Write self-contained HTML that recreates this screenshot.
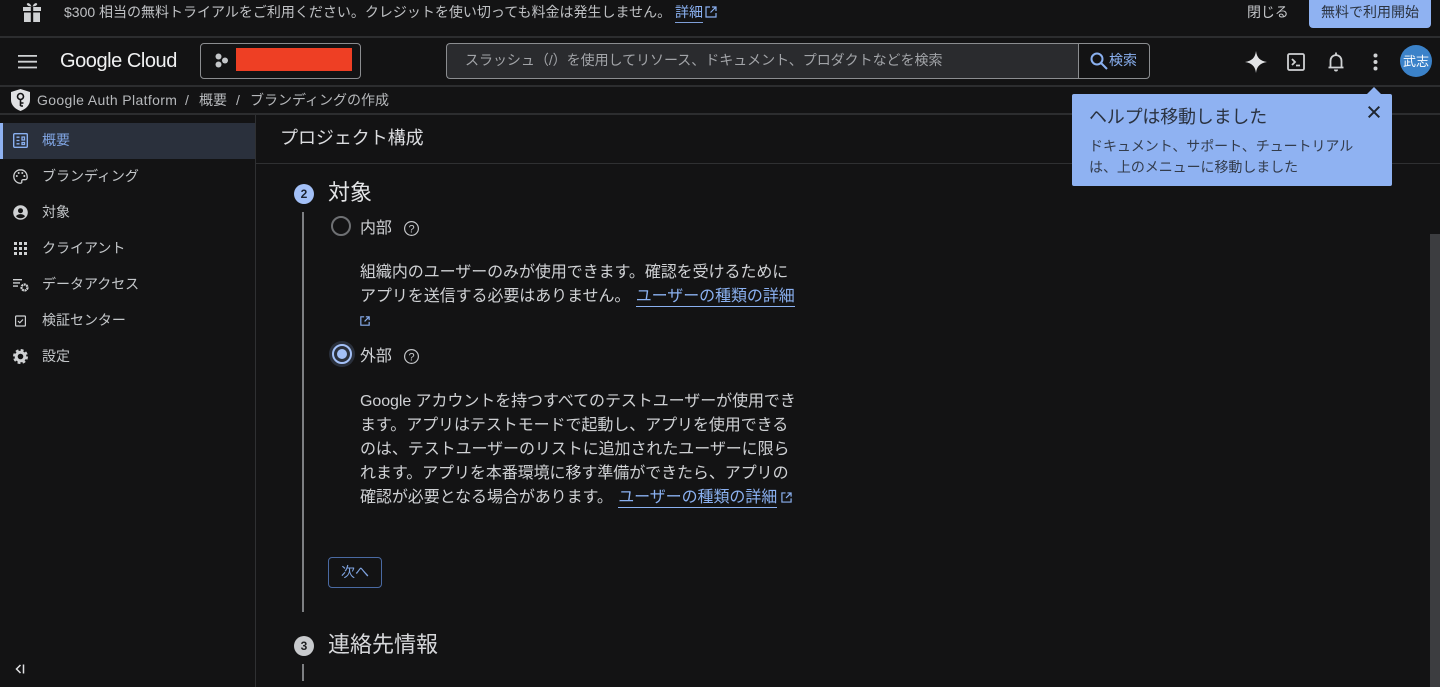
<!DOCTYPE html>
<html lang="ja">
<head>
<meta charset="utf-8">
<title>Google Auth Platform</title>
<style>
html,body{margin:0;padding:0;width:1440px;height:687px;overflow:hidden;background:#131314;}
body{position:relative;font-family:"Liberation Sans","Noto Sans CJK JP",sans-serif;color:#c8cacd;font-size:14px;}
.a{position:absolute;white-space:nowrap;}
.l{position:absolute;background:#2c2d2f;}
svg{position:absolute;display:block;overflow:visible;}
.nav{position:absolute;left:42px;font-size:14px;line-height:20px;color:#c4c7ca;white-space:nowrap;letter-spacing:-.02px;}
.p{position:absolute;left:360px;font-size:16px;line-height:24px;color:#cfd1d4;white-space:nowrap;letter-spacing:-.07px;}
.link{color:#8ab0f0;border-bottom:1px solid #8ab0f0;padding-bottom:1px;}
</style>
</head>
<body>
<!-- top banner -->
<svg style="left:22px;top:2px" width="20" height="20" viewBox="0 0 20 20" fill="#d0d2d4"><path d="M1 5h7.800v4H1zM11.200 5H19v4h-7.800zM2 10.500h6.800V20H2zM11.200 10.500H18V20h-6.800zM5 1.500C6.500.5 8.500 2 9.500 4.500 7 4.500 4 3 5 1.500zM15 1.500C13.500.5 11.500 2 10.500 4.500 13 4.500 16 3 15 1.500z"/></svg>
<div class="a" style="left:64px;top:2px;line-height:20px;font-size:14px;color:#bfc1c4">$300 相当の無料トライアルをご利用ください。クレジットを使い切っても料金は発生しません。</div>
<div class="a" style="left:675px;top:2px;line-height:20px;font-size:14px;color:#8ab0f0;border-bottom:1px solid #7f9fd8">詳細</div>
<svg style="left:705px;top:6px" width="12" height="12" viewBox="0 0 12 12" fill="none" stroke="#8ab0f0" stroke-width="1.200"><path d="M5 1H1v10h10V7M7 1h4v4M11 1L5.500 6.500"/></svg>
<div class="a" style="left:1247px;top:2px;line-height:20px;color:#c4c6c9;letter-spacing:-.1px">閉じる</div>
<div class="a" style="left:1309px;top:-6px;width:122px;height:34px;background:#8fb2f2;border-radius:0 0 4px 4px;color:#2b3340;text-align:center;line-height:36px;font-size:14px">無料で利用開始</div>
<div class="l" style="left:0;top:36px;width:1440px;height:2px"></div>

<!-- header -->
<svg style="left:18px;top:55px" width="19" height="14" viewBox="0 0 19 14" fill="#d0d2d4"><path d="M0 0h19v1.800H0zM0 5.800h19v1.800H0zM0 11.600h19v1.800H0z"/></svg>
<div class="a" style="left:60px;top:47px;font-size:20px;line-height:28px;color:#f0f1f2;letter-spacing:-.45px">Google Cloud</div>
<div class="a" style="left:200px;top:43px;width:159px;height:34px;border:1px solid #8b8d90;border-radius:4px"></div>
<svg style="left:214px;top:53px" width="16" height="16" viewBox="0 0 16 16" fill="#c4c6c9"><circle cx="4.500" cy="3.500" r="3"/><circle cx="4.500" cy="11.500" r="3"/><circle cx="11" cy="7.500" r="3"/></svg>
<div class="a" style="left:236px;top:48px;width:116px;height:23px;background:#ee3f24"></div>

<div class="a" style="left:446px;top:43px;width:632px;height:34px;background:#2a2b2e;border:1px solid #8b8d90;border-right:0;border-radius:4px 0 0 4px"></div>
<div class="a" style="left:465px;top:50px;line-height:20px;font-size:14px;color:#a2a4a8;letter-spacing:-.03px">スラッシュ（/）を使用してリソース、ドキュメント、プロダクトなどを検索</div>
<div class="a" style="left:1078px;top:43px;width:70px;height:34px;border:1px solid #8b8d90;border-radius:0 4px 4px 0"></div>
<svg style="left:1090px;top:52px" width="18" height="18" viewBox="0 0 18 18" fill="none" stroke="#8ab0f0" stroke-width="2"><circle cx="7" cy="7" r="5.500"/><path d="M11 11l6 6"/></svg>
<div class="a" style="left:1109px;top:50px;line-height:20px;color:#8ab0f0">検索</div>

<svg style="left:1245px;top:51px" width="22" height="22" viewBox="0 0 22 22" fill="#e2e3e5"><path d="M11 0C11.800 6.500 15 10 22 11 15 12 11.800 15.500 11 22 10.200 15.500 7 12 0 11 7 10 10.200 6.500 11 0z"/></svg>
<svg style="left:1287px;top:53px" width="18" height="18" viewBox="0 0 18 18" fill="none" stroke="#cfd1d3" stroke-width="1.800"><rect x="1" y="1" width="16" height="16" rx="1.500"/><path d="M5 6l3 3-3 3M9 12.500h4"/></svg>
<svg style="left:1328px;top:52px" width="16" height="20" viewBox="0 0 16 20" fill="none" stroke="#d0d2d4" stroke-width="1.800"><path d="M.5 15.500h15M2.500 15.500V9c0-3.400 2.300-5.900 5.500-5.900s5.500 2.500 5.500 5.900v6.500"/><path d="M8 .5v3"/><path fill="#d0d2d4" stroke="none" d="M6 17.500h4a2 2 0 0 1-4 0z"/></svg>
<svg style="left:1373px;top:53px" width="5" height="18" viewBox="0 0 5 18" fill="#d0d2d4"><circle cx="2.500" cy="2.500" r="2"/><circle cx="2.500" cy="9" r="2"/><circle cx="2.500" cy="15.500" r="2"/></svg>
<div class="a" style="left:1400px;top:45px;width:32px;height:32px;border-radius:50%;background:#3b82c9;color:#fff;text-align:center;line-height:33px;font-size:13px">武志</div>
<div class="l" style="left:0;top:85px;width:1440px;height:2px"></div>

<!-- breadcrumb -->
<svg style="left:11px;top:89px" width="19" height="22" viewBox="0 0 19 22"><path fill="#e0e1e3" d="M9.500 0L19 3v8c0 5-4 9-9.500 11C4 20 0 16 0 11V3z"/><circle cx="9.500" cy="7.500" r="3" fill="none" stroke="#131314" stroke-width="1.600"/><path d="M9.500 10v7M9.500 14h3M9.500 17h2.500" stroke="#131314" stroke-width="1.600" fill="none"/></svg>
<div class="a" style="left:37px;top:90px;line-height:20px;color:#b6b8bb;letter-spacing:.36px">Google Auth Platform</div>
<div class="a" style="left:185px;top:90px;line-height:20px;color:#b6b8bb">/</div>
<div class="a" style="left:199px;top:90px;line-height:20px;color:#b6b8bb">概要</div>
<div class="a" style="left:236px;top:90px;line-height:20px;color:#b6b8bb">/</div>
<div class="a" style="left:250px;top:90px;line-height:20px;color:#b6b8bb">ブランディングの作成</div>
<div class="l" style="left:0;top:113px;width:1440px;height:2px"></div>

<!-- sidebar -->
<div class="l" style="left:255px;top:115px;width:1px;height:572px;background:#2f3032"></div>
<div class="a" style="left:0;top:123px;width:255px;height:36px;background:#2a303c"></div>
<div class="a" style="left:0;top:123px;width:3px;height:36px;background:#8fb2f2"></div>
<svg style="left:13px;top:133px" width="15" height="15" viewBox="0 0 15 15" fill="none" stroke="#8ab0f0" stroke-width="1.400"><rect x=".7" y=".7" width="13.600" height="13.600" rx="1"/><path d="M3.500 4.200h3M3.500 7.500h3M3.500 10.800h3M9 4h2.500v3H9zM9 9.500h2.500v2H9z" stroke-width="1.300"/></svg>
<div class="nav" style="top:130px;color:#7fa3e0">概要</div>

<svg style="left:13px;top:169px" width="15" height="15" viewBox="0 0 15 15" fill="none" stroke="#cfd1d3" stroke-width="1.300"><path d="M7.500.8C3.800.8.800 3.700.8 7.500s3 6.700 6.700 6.700c1 0 1.500-.7 1.300-1.500-.3-1.100.2-2 1.400-2h2c1.200 0 2-1 2-2.300C14.200 3.500 11.200.8 7.500.8z"/><g fill="#cfd1d3" stroke="none"><circle cx="3.800" cy="7" r="1"/><circle cx="5.700" cy="4" r="1"/><circle cx="9.300" cy="4" r="1"/><circle cx="11.300" cy="7" r="1"/></g></svg>
<div class="nav" style="top:166px">ブランディング</div>

<svg style="left:13px;top:205px" width="15" height="15" viewBox="0 0 15 15"><circle cx="7.500" cy="7.500" r="7.300" fill="#cfd1d3"/><circle cx="7.500" cy="5.700" r="2.500" fill="#131314"/><path d="M3 11.200c1-1.500 2.700-2.100 4.500-2.100s3.500.6 4.500 2.100c-1 1.300-2.700 2-4.500 2s-3.500-.7-4.500-2z" fill="#131314"/></svg>
<div class="nav" style="top:202px">対象</div>

<svg style="left:14px;top:242px" width="13" height="13" viewBox="0 0 13 13" fill="#cfd1d3"><path d="M0 0h3v3H0zM5 0h3v3H5zM10 0h3v3h-3zM0 5h3v3H0zM5 5h3v3H5zM10 5h3v3h-3zM0 10h3v3H0zM5 10h3v3H5zM10 10h3v3h-3z"/></svg>
<div class="nav" style="top:238px">クライアント</div>

<svg style="left:13px;top:279px" width="16" height="13" viewBox="0 0 16 13" fill="#cfd1d3"><path d="M0 0h9v1.400H0zM0 3.200h7v1.400H0zM0 6.400h5v1.400H0z"/><circle cx="11.500" cy="8.500" r="3" fill="none" stroke="#cfd1d3" stroke-width="2.200" stroke-dasharray="2 .6"/></svg>
<div class="nav" style="top:274px">データアクセス</div>

<svg style="left:15px;top:315px" width="11" height="12" viewBox="0 0 11 12" fill="none" stroke="#cfd1d3" stroke-width="1.200"><rect x=".6" y="1" width="9.800" height="10" rx=".8"/><path d="M3 6l1.800 1.800L8 4.500"/></svg>
<div class="nav" style="top:310px">検証センター</div>

<svg style="left:13px;top:349px" width="15" height="15" viewBox="0 0 15 15"><circle cx="7.500" cy="7.500" r="4.300" fill="none" stroke="#cfd1d3" stroke-width="3"/><circle cx="7.500" cy="7.500" r="6.300" fill="none" stroke="#cfd1d3" stroke-width="2.400" stroke-dasharray="2.800 2.150"/></svg>
<div class="nav" style="top:346px">設定</div>

<svg style="left:15px;top:664px" width="10" height="10" viewBox="0 0 10 10" fill="none" stroke="#e0e1e3" stroke-width="1.500"><path d="M5.500 1L1.500 5l4 4M8.500 0.500v9"/></svg>

<!-- page title -->
<div class="a" style="left:280px;top:125px;font-size:18px;line-height:26px;color:#dcdde0;letter-spacing:-.05px">プロジェクト構成</div>
<div class="l" style="left:256px;top:163px;width:1184px;height:1px;background:#2f3032"></div>

<!-- step 2 -->
<div class="a" style="left:294px;top:184px;width:20px;height:20px;border-radius:50%;background:#a3c0f7;color:#1c2433;text-align:center;line-height:20px;font-size:12px;font-weight:700">2</div>
<div class="a" style="left:328px;top:178px;font-size:22px;line-height:30px;color:#e3e4e6">対象</div>
<div class="a" style="left:302px;top:212px;width:2px;height:400px;background:#7d7f82"></div>

<div class="a" style="left:331px;top:216px;width:16px;height:16px;border:2px solid #6e7073;border-radius:50%"></div>
<div class="p" style="top:217px">内部</div>
<svg style="left:404px;top:221px" width="15" height="15" viewBox="0 0 15 15"><circle cx="7.500" cy="7.500" r="6.900" fill="none" stroke="#c4c6c9" stroke-width="1.200"/><text x="7.500" y="11.300" text-anchor="middle" font-size="11" font-family="Liberation Sans" fill="#c4c6c9">?</text></svg>

<div class="p" style="top:261px">組織内のユーザーのみが使用できます。確認を受けるために</div>
<div class="p" style="top:285px">アプリを送信する必要はありません。 <span class="link" style="margin-left:1px">ユーザーの種類の詳細</span></div>
<svg style="left:360px;top:316px" width="10" height="10" viewBox="0 0 12 12" fill="none" stroke="#8ab0f0" stroke-width="1.400"><path d="M5 1H1v10h10V7M7 1h4v4M11 1L5.500 6.500"/></svg>

<div class="a" style="left:329px;top:341px;width:26px;height:26px;border-radius:50%;background:#2a303c"></div>
<div class="a" style="left:332px;top:344px;width:16px;height:16px;border:2px solid #a3c0f7;border-radius:50%"></div>
<div class="a" style="left:337px;top:349px;width:10px;height:10px;background:#a3c0f7;border-radius:50%"></div>
<div class="p" style="top:345px">外部</div>
<svg style="left:404px;top:349px" width="15" height="15" viewBox="0 0 15 15"><circle cx="7.500" cy="7.500" r="6.900" fill="none" stroke="#c4c6c9" stroke-width="1.200"/><text x="7.500" y="11.300" text-anchor="middle" font-size="11" font-family="Liberation Sans" fill="#c4c6c9">?</text></svg>

<div class="p" style="top:390px">Google アカウントを持つすべてのテストユーザーが使用でき</div>
<div class="p" style="top:414px">ます。アプリはテストモードで起動し、アプリを使用できる</div>
<div class="p" style="top:438px">のは、テストユーザーのリストに追加されたユーザーに限ら</div>
<div class="p" style="top:462px">れます。アプリを本番環境に移す準備ができたら、アプリの</div>
<div class="p" style="top:486px">確認が必要となる場合があります。 <span class="link" style="margin-left:1px">ユーザーの種類の詳細</span></div>
<svg style="left:781px;top:492px" width="11" height="11" viewBox="0 0 12 12" fill="none" stroke="#8ab0f0" stroke-width="1.300"><path d="M5 1H1v10h10V7M7 1h4v4M11 1L5.500 6.500"/></svg>

<div class="a" style="left:328px;top:557px;width:52px;height:29px;border:1px solid #4a6aa3;border-radius:4px;color:#7fa3e0;text-align:center;line-height:29px;font-size:14px">次へ</div>

<!-- step 3 -->
<div class="a" style="left:294px;top:636px;width:20px;height:20px;border-radius:50%;background:#c8cacd;color:#1f2022;text-align:center;line-height:20px;font-size:12px;font-weight:700">3</div>
<div class="a" style="left:328px;top:630px;font-size:22px;line-height:30px;color:#d6d7da">連絡先情報</div>
<div class="a" style="left:302px;top:664px;width:2px;height:17px;background:#7d7f82"></div>

<!-- scrollbar -->
<div class="a" style="left:1430px;top:234px;width:10px;height:453px;background:#3c3d40"></div>

<!-- help popover -->
<svg style="left:1366px;top:87px" width="16" height="8" viewBox="0 0 16 8" fill="#8fb2f2"><path d="M0 8L8 0l8 8z"/></svg>
<div class="a" style="left:1072px;top:94px;width:320px;height:92px;background:#8fb2f2;border-radius:2px"></div>
<div class="a" style="left:1089px;top:104px;font-size:18px;line-height:26px;color:#2a3240;letter-spacing:-.2px">ヘルプは移動しました</div>
<div class="a" style="left:1089px;top:136px;font-size:14px;line-height:21px;color:#333c4c;letter-spacing:-.06px">ドキュメント、サポート、チュートリアル<br>は、上のメニューに移動しました</div>
<svg style="left:1368px;top:106px" width="12" height="12" viewBox="0 0 12 12" fill="none" stroke="#1f2630" stroke-width="2"><path d="M.7.700l10.600 10.600M11.300.700L.7 11.300"/></svg>
</body>
</html>
